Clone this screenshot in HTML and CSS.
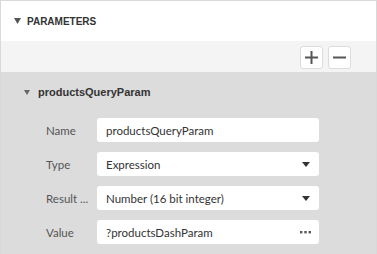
FILE: index.html
```html
<!DOCTYPE html>
<html lang="en">
<head>
<meta charset="utf-8">
<title>Parameters</title>
<link rel="stylesheet" href="styles.css">
</head>
<body>
<div class="panel">
  <div class="panel-header">
    <svg class="caret" width="7" height="6" viewBox="0 0 7 6"><path d="M0 0H7L3.5 6Z" fill="#555"/></svg>
    <span class="panel-title">PARAMETERS</span>
  </div>
  <div class="toolbar">
    <button class="tool-btn" title="Add">
      <svg width="13" height="13" viewBox="0 0 13 13"><path d="M6.5 0V13M0 6.5H13" stroke="#555" stroke-width="2"/></svg>
    </button>
    <button class="tool-btn" title="Remove">
      <svg width="13" height="13" viewBox="0 0 13 13"><path d="M0 6.5H13" stroke="#555" stroke-width="2"/></svg>
    </button>
  </div>
  <div class="group">
    <div class="group-header">
      <svg class="caret" width="6" height="5" viewBox="0 0 6 5"><path d="M0 0H6L3 5Z" fill="#666"/></svg>
      <span class="group-title">productsQueryParam</span>
    </div>
    <div class="row">
      <label class="row-label">Name</label>
      <div class="field"><span class="field-text">productsQueryParam</span></div>
    </div>
    <div class="row">
      <label class="row-label">Type</label>
      <div class="field"><span class="field-text">Expression</span>
        <svg class="drop" width="8" height="5" viewBox="0 0 8 5"><path d="M0 0H8L4 5Z" fill="#333"/></svg>
      </div>
    </div>
    <div class="row">
      <label class="row-label">Result ...</label>
      <div class="field"><span class="field-text">Number (16 bit integer)</span>
        <svg class="drop" width="8" height="5" viewBox="0 0 8 5"><path d="M0 0H8L4 5Z" fill="#333"/></svg>
      </div>
    </div>
    <div class="row">
      <label class="row-label">Value</label>
      <div class="field"><span class="field-text">?productsDashParam</span>
        <svg class="dots" width="11" height="3" viewBox="0 0 11 3"><rect x="0" y="0" width="2.4" height="2.4" fill="#555"/><rect x="4.3" y="0" width="2.4" height="2.4" fill="#555"/><rect x="8.6" y="0" width="2.4" height="2.4" fill="#555"/></svg>
      </div>
    </div>
  </div>
</div>
</body>
</html>
```

FILE: styles.css
```css
html, body {margin: 0; padding: 0;}
body {width: 377px; height: 254px; overflow: hidden; font-family: "Liberation Sans", Arial, sans-serif; background: #fff;}

.panel {box-sizing: border-box; height: 254px; border: 1px solid #d9d9d9; border-bottom: none; display: flex; flex-direction: column;}

.panel-header {height: 40px; display: flex; align-items: center; padding-left: 13px; gap: 6px;}
.panel-title {font-size: 10px; font-weight: bold; color: #333;}

.toolbar {height: 31px; background: #f4f4f4; display: flex; justify-content: flex-end; align-items: flex-start; padding: 5px 25px 0 0; box-sizing: border-box; gap: 5px;}
.tool-btn {width: 23px; height: 23px; padding: 0; background: #fff; border: 1px solid #dcdcdc; border-radius: 3px; display: flex; align-items: center; justify-content: center;}

.group {flex: 1; background: #dcdcdc; padding-top: 12px;}
.group-header {height: 16px; display: flex; align-items: center; padding-left: 23px; gap: 8px; margin-bottom: 18px;}
.group-title {font-size: 11px; font-weight: bold; color: #333;}

.row {display: flex; align-items: center; height: 24px; margin-bottom: 10px; padding-left: 45px;}
.row-label {width: 51px; font-family: Lato, sans-serif; font-size: 11.5px; color: #555; white-space: nowrap;}
.field {width: 222px; height: 24px; box-sizing: border-box; background: #fff; border-radius: 3px; display: flex; align-items: center; justify-content: space-between; padding: 0 8px 0 9px;}
.field-text {font-family: Lato, sans-serif; font-size: 11.5px; color: #333;}
.drop {margin-right: 1px;}
```
